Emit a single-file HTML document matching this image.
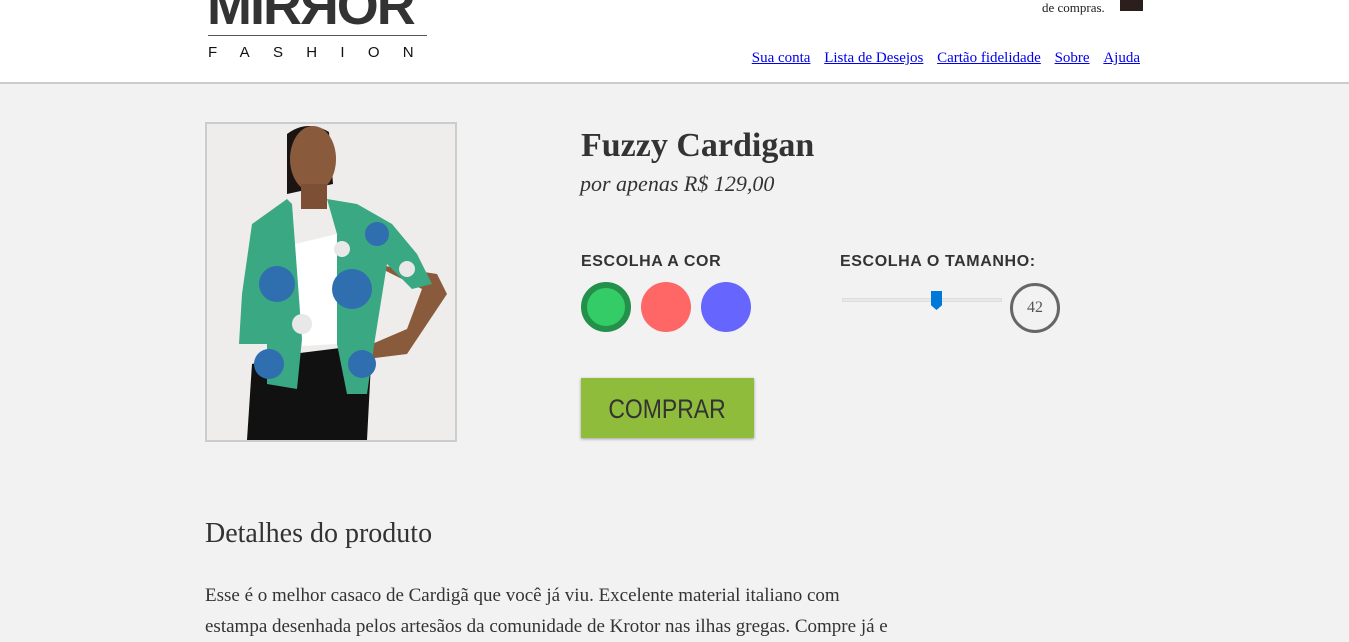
<!DOCTYPE html>
<html><head><meta charset="utf-8"><style>
*{margin:0;padding:0;box-sizing:border-box}
body{width:1349px;height:642px;overflow:hidden;background:#f2f2f2;font-family:"Liberation Serif",serif;color:#333;position:relative}
header{position:absolute;left:0;top:0;width:1349px;height:84px;background:#fff;border-bottom:2px solid #ccc}
.logo{position:absolute;left:207px;top:-16px;font-family:"Liberation Sans",sans-serif;font-weight:bold;font-size:54px;color:#333;letter-spacing:-2px;line-height:44px;transform:scaleX(1.0);transform-origin:left}
.logoline{position:absolute;left:208px;top:35px;width:219px;height:1px;background:#555}
.fashion{position:absolute;left:208px;top:44px;font-family:"Liberation Sans",sans-serif;font-size:15px;color:#111;letter-spacing:23.3px}
.cart{position:absolute;left:1042px;top:0;font-size:13px;color:#222}
.cartimg{position:absolute;left:1120px;top:0;width:23px;height:11px;background:#2a1f1c}
nav{position:absolute;right:209px;top:50px;font-size:15px}
nav a{color:#00e;text-decoration:underline;margin-left:10px}
.photo{position:absolute;left:205px;top:122px;width:252px;height:320px;border:2px solid #ccc;background:#efedeb;overflow:hidden}
h1{position:absolute;left:581px;top:127px;font-size:34px;font-weight:bold;color:#333}
.price{position:absolute;left:580px;top:171px;font-size:22px;font-style:italic;color:#333}
.lbl{position:absolute;top:253px;font-family:"Liberation Sans",sans-serif;font-weight:bold;font-size:16px;letter-spacing:.6px;color:#333}
.c{position:absolute;top:282px;width:50px;height:50px;border-radius:50%}
.track{position:absolute;left:842px;top:298px;width:160px;height:4px;border:1px solid #ddd;background:#e8e8e8}
.thumb{position:absolute;left:931px;top:291px;width:11px;height:19px;background:#0078d7;clip-path:polygon(0 0,100% 0,100% 75%,50% 100%,0 75%)}
.size{position:absolute;left:1010px;top:283px;width:50px;height:50px;border:3px solid #666;border-radius:50%;text-align:center;line-height:44px;font-size:16px;color:#555}
.btn{position:absolute;left:581px;top:378px;width:173px;height:60px;background:#8fbc3b;box-shadow:0 1px 3px rgba(0,0,0,.35);font-family:"Liberation Sans",sans-serif;font-size:27px;color:#333;text-align:center;line-height:62px}
.btn span{display:inline-block;transform:scaleX(.85)}
h2{position:absolute;left:205px;top:518px;font-size:28px;font-weight:normal;color:#333}
p{position:absolute;left:205px;top:580px;width:700px;font-size:19px;line-height:31px;color:#333}
</style></head><body>
<header>
<div class="logo">MIRЯOR</div>
<div class="logoline"></div>
<div class="fashion">FASHION</div>
<div class="cart">de compras.</div><div class="cartimg"></div>
<nav><a>Sua conta</a> <a>Lista de Desejos</a> <a>Cartão fidelidade</a> <a>Sobre</a> <a>Ajuda</a></nav>
</header>
<div class="photo"><svg width="248" height="316" viewBox="0 0 248 316">
<path d="M80 10 Q100 -5 122 8 L126 60 L80 70 Z" fill="#1a1412"/>
<ellipse cx="106" cy="35" rx="23" ry="33" fill="#8a5a3c"/>
<rect x="94" y="60" width="26" height="25" fill="#7d5035"/>
<path d="M85 230 L165 220 L160 316 L40 316 L45 240 Z" fill="#111"/>
<path d="M88 120 L130 110 L130 220 L95 222 Z" fill="#fff"/>
<path d="M165 140 L230 150 L240 170 L200 230 L160 235 L165 220 L200 205 L215 165 Z" fill="#8a5a3c"/>
<path d="M80 75 L45 100 L35 170 L32 220 L60 220 L60 260 L90 265 L95 215 L88 120 L85 80 Z" fill="#3aa882"/>
<path d="M120 75 L150 80 L185 100 L210 130 L225 160 L205 165 L180 140 L168 215 L160 270 L140 270 L130 220 L130 110 Z" fill="#3aa882"/>
<circle cx="70" cy="160" r="18" fill="#2f6fb0"/><circle cx="145" cy="165" r="20" fill="#2f6fb0"/>
<circle cx="62" cy="240" r="15" fill="#2f6fb0"/><circle cx="155" cy="240" r="14" fill="#2f6fb0"/>
<circle cx="170" cy="110" r="12" fill="#2f6fb0"/><circle cx="135" cy="125" r="8" fill="#e8e8e8"/>
<circle cx="95" cy="200" r="10" fill="#e8e8e8"/><circle cx="200" cy="145" r="8" fill="#e8e8e8"/>
</svg></div>
<h1>Fuzzy Cardigan</h1>
<div class="price">por apenas R$ 129,00</div>
<div class="lbl" style="left:581px">ESCOLHA A COR</div>
<div class="lbl" style="left:840px">ESCOLHA O TAMANHO:</div>
<div class="c" style="left:581px;background:#33cc66;border:6px solid #24914a"></div>
<div class="c" style="left:641px;background:#ff6666"></div>
<div class="c" style="left:701px;background:#6666ff"></div>
<div class="track"></div><div class="thumb"></div>
<div class="size">42</div>
<div class="btn"><span>COMPRAR</span></div>
<h2>Detalhes do produto</h2>
<p>Esse é o melhor casaco de Cardigã que você já viu. Excelente material italiano com estampa desenhada pelos artesãos da comunidade de Krotor nas ilhas gregas. Compre já e</p>
</body></html>
